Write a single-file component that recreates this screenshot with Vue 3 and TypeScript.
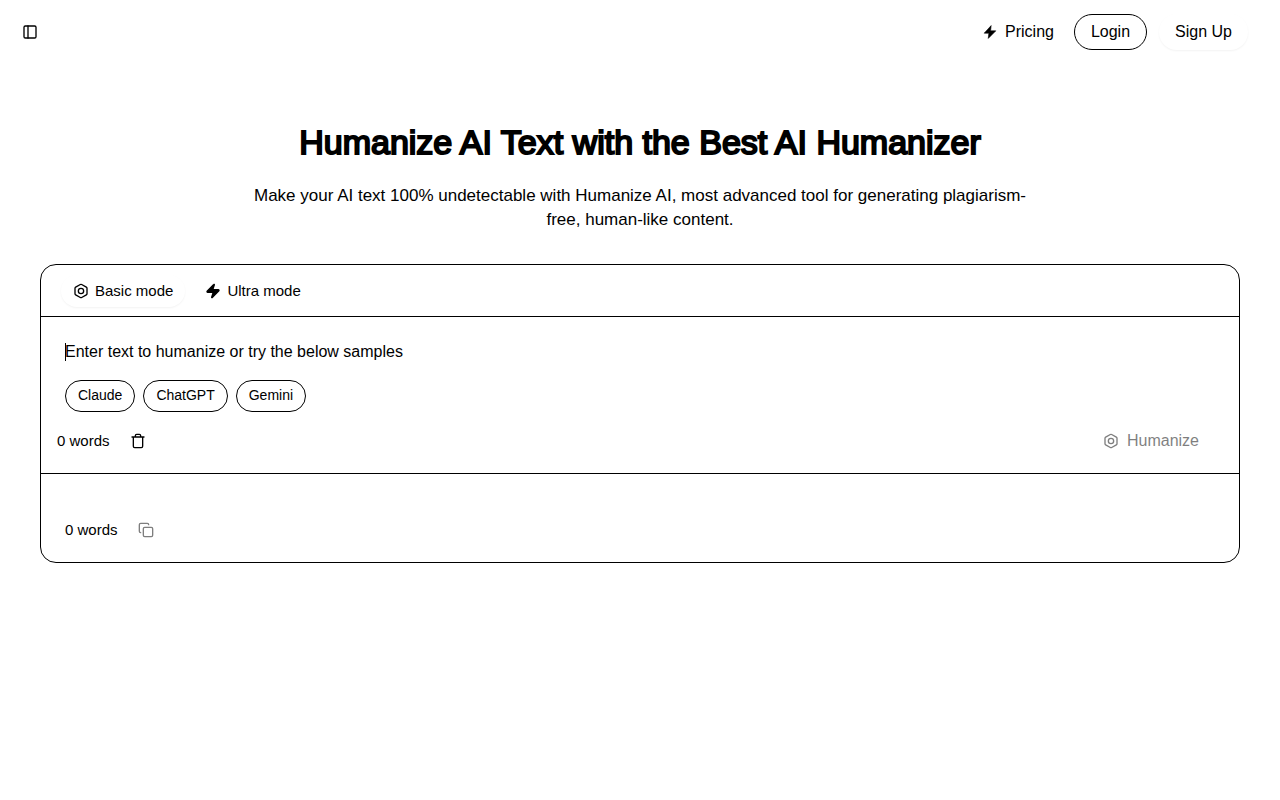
<script setup lang="ts">
import { computed, ref } from 'vue'

type Mode = 'basic' | 'ultra'

const mode = ref<Mode>('basic')
const text = ref('')
const samples: string[] = ['Claude', 'ChatGPT', 'Gemini']
const words = computed(() => text.value.split(/\s+/).filter(Boolean).length)
</script>

<template>
  <div class="page">
    <header class="topbar">
      <button class="icon-button" aria-label="Toggle sidebar">
        <svg class="icon" viewBox="0 0 24 24"><rect x="3" y="3" width="18" height="18" rx="2" /><path d="M9 3v18" /></svg>
      </button>
      <nav class="nav">
        <a href="#" class="pricing">
          <svg class="bolt" viewBox="0 0 24 24"><path d="M14 1L2 14h8L9 23l13-13h-9z" /></svg>
          Pricing
        </a>
        <a href="#" class="login">Login</a>
        <a href="#" class="signup">Sign Up</a>
      </nav>
    </header>

    <main class="main">
      <h1 class="title">Humanize AI Text with the Best AI Humanizer</h1>
      <p class="subtitle">Make your AI text 100% undetectable with Humanize AI, most advanced tool for generating plagiarism-free, human-like content.</p>

      <section class="panel">
        <div class="modes">
          <button class="mode" :class="{ active: mode === 'basic' }" @click="mode = 'basic'">
            <svg class="icon" viewBox="0 0 24 24"><path d="M21 16V8a2 2 0 0 0-1-1.73l-7-4a2 2 0 0 0-2 0l-7 4A2 2 0 0 0 3 8v8a2 2 0 0 0 1 1.73l7 4a2 2 0 0 0 2 0l7-4A2 2 0 0 0 21 16z" /><circle cx="12" cy="12" r="4" /></svg>
            Basic mode
          </button>
          <button class="mode" :class="{ active: mode === 'ultra' }" @click="mode = 'ultra'">
            <svg class="icon solid" viewBox="0 0 24 24"><path d="M4 14a1 1 0 0 1-.78-1.63l9.9-10.2a.5.5 0 0 1 .86.46l-1.92 6.02A1 1 0 0 0 13 10h7a1 1 0 0 1 .78 1.63l-9.9 10.2a.5.5 0 0 1-.86-.46l1.92-6.02A1 1 0 0 0 11 14z" /></svg>
            Ultra mode
          </button>
        </div>

        <div class="editor">
          <div class="field">
            <textarea v-model="text" rows="1" aria-label="Text to humanize" placeholder="Enter text to humanize or try the below samples"></textarea>
            <span v-if="!text" class="caret"></span>
          </div>
          <div class="samples">
            <button v-for="sample in samples" :key="sample" class="sample">{{ sample }}</button>
          </div>
          <div class="actions">
            <span class="count">{{ words }} words</span>
            <button class="icon-button" aria-label="Clear text" @click="text = ''">
              <svg class="icon" viewBox="0 0 24 24"><path d="M3 6h18M19 6v14a2 2 0 0 1-2 2H7a2 2 0 0 1-2-2V6M8 6V4a2 2 0 0 1 2-2h4a2 2 0 0 1 2 2v2" /></svg>
            </button>
            <button class="humanize" :disabled="!words">
              <svg class="icon" viewBox="0 0 24 24"><path d="M21 16V8a2 2 0 0 0-1-1.73l-7-4a2 2 0 0 0-2 0l-7 4A2 2 0 0 0 3 8v8a2 2 0 0 0 1 1.73l7 4a2 2 0 0 0 2 0l7-4A2 2 0 0 0 21 16z" /><circle cx="12" cy="12" r="4" /></svg>
              Humanize
            </button>
          </div>
        </div>

        <div class="result">
          <span class="count">0 words</span>
          <button class="icon-button" aria-label="Copy result" disabled>
            <svg class="icon" viewBox="0 0 24 24"><rect x="8" y="8" width="14" height="14" rx="2" /><path d="M4 16c-1.1 0-2-.9-2-2V4c0-1.1.9-2 2-2h10c1.1 0 2 .9 2 2" /></svg>
          </button>
        </div>
      </section>
    </main>
  </div>
</template>

<style>
body {
  margin: 0;
  background: #fff;
}
</style>

<style scoped>
.page {
  color: #000;
  font: 16px/24px "Liberation Sans", Arial, sans-serif;
}
.page * {
  box-sizing: border-box;
}
button {
  padding: 0;
  border: 0;
  background: transparent;
  color: inherit;
  font: inherit;
  cursor: pointer;
}
button:disabled {
  opacity: 0.5;
  cursor: default;
}
a {
  color: inherit;
  text-decoration: none;
}
.icon {
  width: 16px;
  height: 16px;
  flex: none;
  fill: none;
  stroke: currentColor;
  stroke-width: 2;
  stroke-linecap: round;
  stroke-linejoin: round;
}
.icon.solid {
  fill: currentColor;
}
.bolt {
  width: 14px;
  height: 14px;
  fill: currentColor;
  stroke: currentColor;
  stroke-linejoin: round;
}
.icon-button {
  display: flex;
  align-items: center;
  justify-content: center;
  width: 32px;
  height: 32px;
}
.topbar {
  display: flex;
  align-items: center;
  justify-content: space-between;
  height: 64px;
  padding: 0 32px 0 14px;
}
.nav {
  display: flex;
  align-items: center;
}
.pricing {
  display: flex;
  align-items: center;
  gap: 8px;
  margin-right: 20px;
}
.login,
.signup {
  height: 36px;
  padding: 5px 16px;
  border-radius: 18px;
}
.login {
  margin-right: 12px;
  border: 1px solid #000;
}
.signup {
  padding: 6px 16px;
  box-shadow: 0 1px 2px rgba(0, 0, 0, 0.05);
}
.main {
  padding: 56px 40px 40px;
}
.title {
  margin: 0;
  font-size: 34px;
  line-height: 44px;
  font-weight: 400;
  text-align: center;
  -webkit-text-stroke: 2px currentColor;
}
.subtitle {
  max-width: 800px;
  margin: 20px auto 32px;
  font-size: 17px;
  text-align: center;
}
.panel {
  border: 1px solid #000;
  border-radius: 16px;
}
.modes {
  display: flex;
  gap: 8px;
  padding: 10px 20px 9px;
  border-bottom: 1px solid #000;
}
.mode {
  display: flex;
  align-items: center;
  gap: 6px;
  height: 32px;
  padding: 0 12px;
  border-radius: 16px;
  font-size: 15px;
}
.mode.active {
  box-shadow: 0 1px 2px rgba(0, 0, 0, 0.05);
}
.editor {
  padding: 23px 24px 16px;
  border-bottom: 1px solid #000;
}
.field {
  position: relative;
}
textarea {
  display: block;
  width: 100%;
  height: 24px;
  padding: 0;
  border: 0;
  outline: 0;
  resize: none;
  background: transparent;
  color: inherit;
  font: inherit;
}
textarea::placeholder {
  color: #000;
  opacity: 1;
}
.caret {
  position: absolute;
  top: 3px;
  left: 0;
  width: 1px;
  height: 18px;
  background: #000;
}
.samples {
  display: flex;
  gap: 8px;
  margin-top: 16px;
}
.sample {
  height: 32px;
  padding: 0 12px 2px;
  border: 1px solid #000;
  border-radius: 16px;
  font-size: 14px;
  line-height: 20px;
}
.actions {
  display: flex;
  align-items: center;
  gap: 12px;
  margin: 13px 0 0 -8px;
}
.count {
  font-size: 15px;
}
.humanize {
  display: flex;
  align-items: center;
  gap: 8px;
  margin-left: auto;
  padding: 0 16px;
}
.result {
  display: flex;
  align-items: center;
  gap: 12px;
  padding: 40px 24px 16px;
}
</style>
